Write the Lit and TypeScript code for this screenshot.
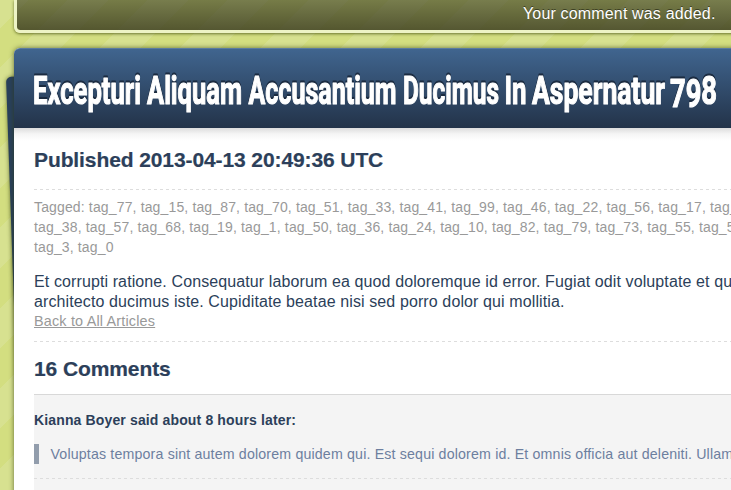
import { LitElement, html, css, svg } from "lit";
import { customElement } from "lit/decorators.js";

const WORDS: [string, number, number][] = [
  ["Excepturi", 33, 108],
  ["Aliquam", 147, 95],
  ["Accusantium", 248.5, 148],
  ["Ducimus", 403, 96],
  ["In", 504.5, 22],
  ["Aspernatur", 532, 133],
];

@customElement("app-root")
export class AppRoot extends LitElement {
  static styles = css`
    :host {
      display: block;
      position: relative;
      width: 731px;
      height: 490px;
      overflow: hidden;
      box-sizing: border-box;
      padding-left: 14px;
      font-family: "Liberation Sans", Arial, sans-serif;
      color: #2c3f5a;
      background: repeating-linear-gradient(135deg, #d7e190 0 19.8px, #d3de80 19.8px 48.08px, #d7e190 48.08px 56.57px);
    }
    * { box-sizing: border-box; }
    .notice {
      height: 33px;
      width: 760px;
      border: 3px solid #edf3c5;
      border-top: 0;
      border-radius: 0 0 0 6px;
      background: linear-gradient(rgba(70, 73, 42, 0.66), rgba(60, 61, 32, 0.84));
      background-clip: padding-box;
      box-shadow: 0 1px 3px rgba(60, 70, 10, 0.7);
      color: #fff;
      font-size: 16px;
      letter-spacing: 0.16px;
      line-height: 28px;
      text-shadow: 0 -1px 0 #3c4023;
      padding-left: 506px;
      white-space: nowrap;
    }
    .sheet {
      position: absolute;
      left: 6px;
      top: 77px;
      width: 300px;
      height: 380px;
      border-radius: 5px;
      background: #29405b;
      transform: rotate(-2deg);
      transform-origin: 0 0;
      box-shadow: 0 0 4px rgba(60, 70, 20, 0.7);
    }
    .card {
      position: relative;
      margin-top: 15px;
      width: 760px;
      height: 460px;
      background: #fff;
      border-radius: 6px 0 0 0;
      box-shadow: 0 0 5px rgba(50, 60, 20, 0.7);
      white-space: nowrap;
    }
    .head {
      height: 80px;
      border-radius: 6px 0 0 0;
      border-top: 1px solid #5a7ba0;
      background: linear-gradient(#40658f, #233349);
    }
    .title {
      display: block;
      margin-top: -1px;
      font: bold 38px Roboto, sans-serif;
      fill: #fff;
      stroke: #fff;
      stroke-width: 1.2px;
      stroke-linejoin: round;
      filter: drop-shadow(0 -2px 0 #1b2b40);
    }
    .body {
      padding: 0 0 0 20px;
      height: 380px;
      background: linear-gradient(#dcdcdc, #f5f5f5 6px, #fff 13px) no-repeat;
    }
    h2 { margin: 0; font-size: 21px; letter-spacing: -0.1px; line-height: 26px; font-weight: bold; -webkit-text-stroke: 0.2px; }
    .published { padding-top: 19px; height: 61px; }
    .dash { height: 1px; background: repeating-linear-gradient(90deg, #ddd 0 3px, transparent 3px 6px); }
    .tags { padding-top: 7px; font-size: 14px; letter-spacing: 0.145px; line-height: 20px; color: #999; }
    .text { padding-top: 15px; font-size: 16px; letter-spacing: 0.11px; line-height: 20px; }
    .back { font-size: 14.4px; letter-spacing: 0.18px; line-height: 20px; color: #999; text-decoration: underline; display: block; margin-top: -1px; height: 30px; }
    .count { padding-top: 14px; height: 52px; }
    .comment { border-top: 1px solid #d8d8d8; background: #f4f4f4; height: 100px; padding-top: 15px; }
    .who { font-size: 14px; letter-spacing: 0.14px; font-weight: bold; line-height: 20px; }
    .quote { margin: 14px 0; height: 20px; border-left: 5px solid #929dac; padding-left: 11.5px; font-size: 14.2px; letter-spacing: 0.165px; line-height: 20px; color: #6d7f9f; }
  `;

  render() {
    return html`
      <div class="notice">Your comment was added.</div>
      <div class="sheet"></div>
      <div class="card">
        <div class="head">
          <svg class="title" width="717" height="80" viewBox="14 48 717 80">
            ${WORDS.map(([word, x, width]) => svg`<text x=${x} y="104" textLength=${width} lengthAdjust="spacingAndGlyphs">${word}</text>`)}
            <text x="670" y="107" textLength="47" lengthAdjust="spacingAndGlyphs">79<tspan dy="-3">8</tspan></text>
          </svg>
        </div>
        <div class="body">
          <h2 class="published">Published 2013-04-13 20:49:36 UTC</h2>
          <div class="dash"></div>
          <div class="tags">
            <div>Tagged: tag_77, tag_15, tag_87, tag_70, tag_51, tag_33, tag_41, tag_99, tag_46, tag_22, tag_56, tag_17, tag_92,</div>
            <div>tag_38, tag_57, tag_68, tag_19, tag_1, tag_50, tag_36, tag_24, tag_10, tag_82, tag_79, tag_73, tag_55, tag_58,</div>
            <div>tag_3, tag_0</div>
          </div>
          <div class="text">
            <div>Et corrupti ratione. Consequatur laborum ea quod doloremque id error. Fugiat odit voluptate et quia</div>
            <div>architecto ducimus iste. Cupiditate beatae nisi sed porro dolor qui mollitia.</div>
          </div>
          <a class="back">Back to All Articles</a>
          <div class="dash"></div>
          <h2 class="count">16 Comments</h2>
          <div class="comment">
            <div class="who">Kianna Boyer said about 8 hours later:</div>
            <div class="quote">Voluptas tempora sint autem dolorem quidem qui. Est sequi dolorem id. Et omnis officia aut deleniti. Ullam</div>
            <div class="dash"></div>
          </div>
        </div>
      </div>
    `;
  }
}
